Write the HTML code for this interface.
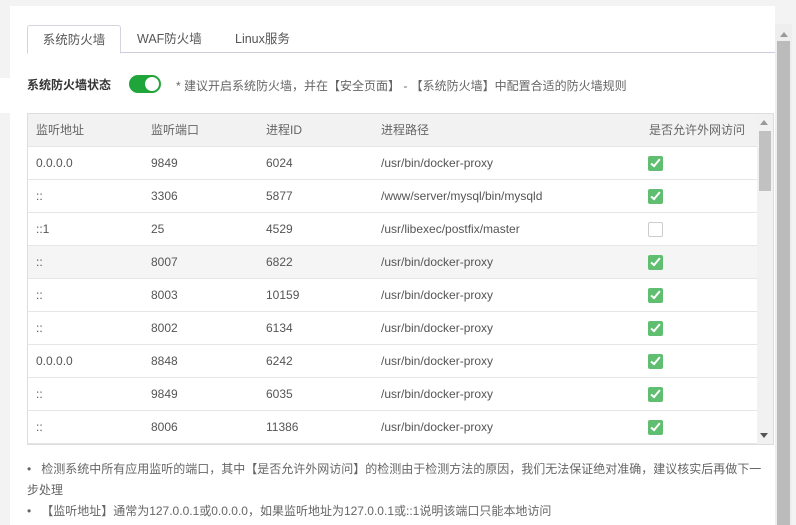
<!DOCTYPE html><html><head><meta charset="utf-8"><style>
body{margin:0;width:796px;height:525px;overflow:hidden;background:#f3f3f3;font-family:"Liberation Sans","Noto Sans CJK SC",sans-serif;font-size:12px;color:#555;position:relative}
.panel{position:absolute;left:10px;top:6px;width:765px;height:519px;background:#fff}
.lgap{position:absolute;left:0;top:78px;width:10px;height:35px;background:#fff}
.tabs{position:absolute;left:27px;top:25px;width:748px;height:27px;border-bottom:1px solid #cfcbdc}
.tab{position:absolute;top:0;height:27px;line-height:28px;font-size:12.5px;color:#555}
.t1{left:0;width:92px;border:1px solid #d6d3df;border-bottom:1px solid #fff;background:#fff;text-align:center;border-radius:3px 3px 0 0;height:27px}
.status{position:absolute;left:27px;top:76px;font-weight:bold;color:#333;font-size:12px}
.sw{position:absolute;left:129px;top:75px;width:32px;height:18px;border-radius:9px;background:#20a53a}
.sw i{position:absolute;right:2px;top:2px;width:14px;height:14px;border-radius:50%;background:#fff}
.tip{position:absolute;left:176px;top:77px;color:#666;font-size:12px}
.tbl{position:absolute;left:27px;top:113px;width:745px;height:330px;border:1px solid #ddd;overflow:hidden}
.row{position:absolute;left:0;width:730px;height:32px;border-bottom:1px solid #e6e6e6;line-height:32px}
.row span{position:absolute;top:0}
.hd{background:#f2f2f2;color:#666}
.ck{position:absolute;left:620px;top:9px;width:15px;height:15px;border-radius:2px;background:#5fbe70}
.ck:after{content:"";position:absolute;left:5px;top:1px;width:3px;height:8px;border:solid #fff;border-width:0 2px 2px 0;transform:rotate(40deg)}
.ck.off{background:#fff;border:1px solid #ccc;width:13px;height:13px}
.ck.off:after{display:none}
.isb{position:absolute;left:729px;top:0;width:16px;height:330px;background:#f1f1f1}
.osb{position:absolute;left:775px;top:24px;width:17px;height:501px;background:#eee}
.notes{position:absolute;left:27px;top:459px;width:740px;color:#666;line-height:21px;font-size:12px}
</style></head><body>
<div class="panel"></div><div class="lgap"></div>
<div class="tabs"><div class="tab t1">系统防火墙</div><div class="tab" style="left:110px">WAF防火墙</div><div class="tab" style="left:208px">Linux服务</div></div>
<div class="status">系统防火墙状态</div><div class="sw"><i></i></div>
<div class="tip">* 建议开启系统防火墙，并在【安全页面】 - 【系统防火墙】中配置合适的防火墙规则</div>
<div class="tbl">
<div class="row hd" style="top:0"><span style="left:8px">监听地址</span><span style="left:123px">监听端口</span><span style="left:238px">进程ID</span><span style="left:353px">进程路径</span><span style="left:621px">是否允许外网访问</span></div>
<div class="row" style="top:33px"><span style="left:8px">0.0.0.0</span><span style="left:123px">9849</span><span style="left:238px">6024</span><span style="left:353px">/usr/bin/docker-proxy</span><i class="ck"></i></div>
<div class="row" style="top:66px"><span style="left:8px">::</span><span style="left:123px">3306</span><span style="left:238px">5877</span><span style="left:353px">/www/server/mysql/bin/mysqld</span><i class="ck"></i></div>
<div class="row" style="top:99px"><span style="left:8px">::1</span><span style="left:123px">25</span><span style="left:238px">4529</span><span style="left:353px">/usr/libexec/postfix/master</span><i class="ck off"></i></div>
<div class="row" style="top:132px;background:#f5f5f5"><span style="left:8px">::</span><span style="left:123px">8007</span><span style="left:238px">6822</span><span style="left:353px">/usr/bin/docker-proxy</span><i class="ck"></i></div>
<div class="row" style="top:165px"><span style="left:8px">::</span><span style="left:123px">8003</span><span style="left:238px">10159</span><span style="left:353px">/usr/bin/docker-proxy</span><i class="ck"></i></div>
<div class="row" style="top:198px"><span style="left:8px">::</span><span style="left:123px">8002</span><span style="left:238px">6134</span><span style="left:353px">/usr/bin/docker-proxy</span><i class="ck"></i></div>
<div class="row" style="top:231px"><span style="left:8px">0.0.0.0</span><span style="left:123px">8848</span><span style="left:238px">6242</span><span style="left:353px">/usr/bin/docker-proxy</span><i class="ck"></i></div>
<div class="row" style="top:264px"><span style="left:8px">::</span><span style="left:123px">9849</span><span style="left:238px">6035</span><span style="left:353px">/usr/bin/docker-proxy</span><i class="ck"></i></div>
<div class="row" style="top:297px"><span style="left:8px">::</span><span style="left:123px">8006</span><span style="left:238px">11386</span><span style="left:353px">/usr/bin/docker-proxy</span><i class="ck"></i></div>
<div class="isb"><div style="position:absolute;left:3px;top:6px;border:4px solid transparent;border-bottom:5px solid #999;border-top:0"></div><div style="position:absolute;left:2px;top:17px;width:12px;height:60px;background:#c1c1c1"></div><div style="position:absolute;left:3px;bottom:6px;border:4px solid transparent;border-top:5px solid #555;border-bottom:0"></div></div>
</div>
<div class="notes">•&nbsp;&nbsp; 检测系统中所有应用监听的端口，其中【是否允许外网访问】的检测由于检测方法的原因，我们无法保证绝对准确，建议核实后再做下一步处理<br>•&nbsp;&nbsp; 【监听地址】通常为127.0.0.1或0.0.0.0，如果监听地址为127.0.0.1或::1说明该端口只能本地访问</div>
<div class="osb"><div style="position:absolute;left:5px;top:8px;border:4px solid transparent;border-bottom:5px solid #999;border-top:0"></div><div style="position:absolute;left:2px;top:17px;width:13px;height:484px;background:#bbb"></div></div>
</body></html>
